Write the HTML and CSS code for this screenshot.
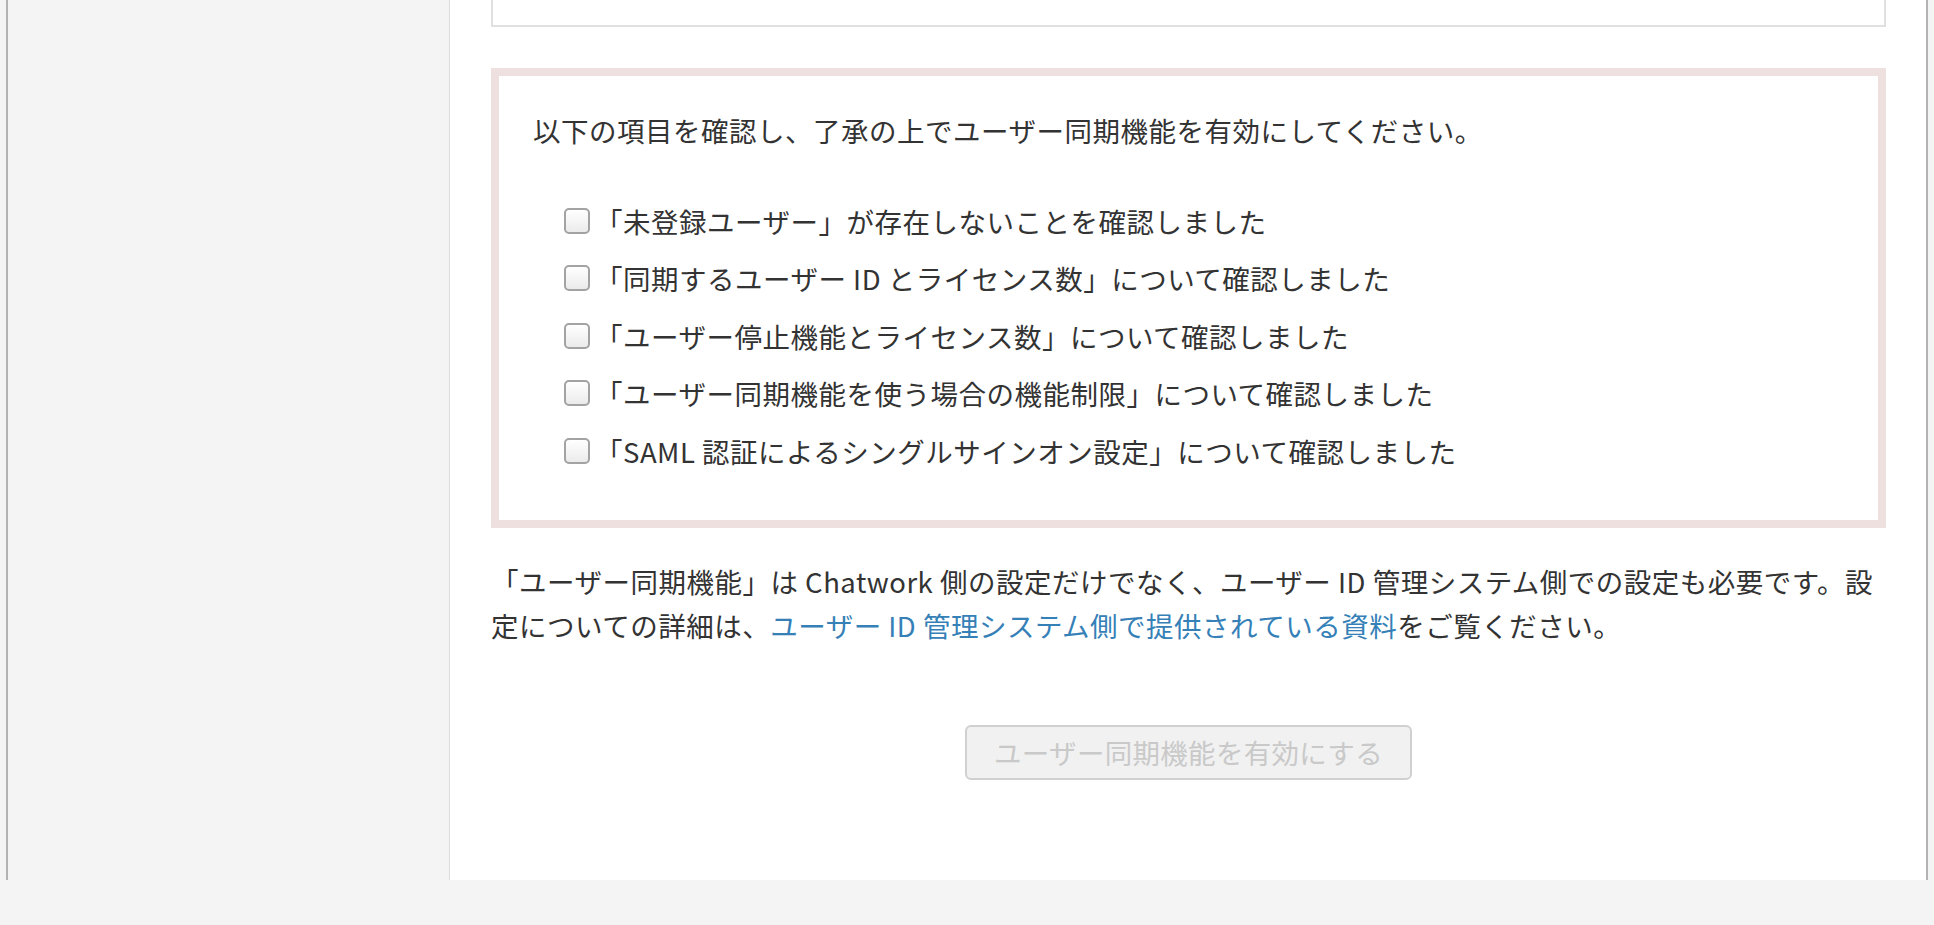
FILE: index.html
```html
<!DOCTYPE html>
<html>
  <head>
    <meta charset="utf-8">
    <title>ユーザー同期機能</title>
    <link rel="stylesheet" href="styles.css">
  </head>
  <body>
    <div class="frame">
      <div class="sidebar"></div>

      <div class="main">
        <!-- end of the previous section, scrolled mostly out of view -->
        <div class="prev-card"></div>

        <div class="confirm-box">
          <p class="confirm-lead">以下の項目を確認し、了承の上でユーザー同期機能を有効にしてください。</p>
          <ul class="check-list">
            <li><label><input type="checkbox" class="check">「未登録ユーザー」が存在しないことを確認しました</label></li>
            <li><label><input type="checkbox" class="check">「同期するユーザー ID とライセンス数」について確認しました</label></li>
            <li><label><input type="checkbox" class="check">「ユーザー停止機能とライセンス数」について確認しました</label></li>
            <li><label><input type="checkbox" class="check">「ユーザー同期機能を使う場合の機能制限」について確認しました</label></li>
            <li><label><input type="checkbox" class="check">「SAML 認証によるシングルサインオン設定」について確認しました</label></li>
          </ul>
        </div>

        <p class="note">「ユーザー同期機能」は Chatwork 側の設定だけでなく、ユーザー ID 管理システム側での設定も必要です。設定についての詳細は、<a href="#" class="note-link">ユーザー ID 管理システム側で提供されている資料</a>をご覧ください。</p>

        <div class="actions">
          <button type="button" class="enable-button" disabled>ユーザー同期機能を有効にする</button>
        </div>
      </div>
    </div>
  </body>
</html>
```

FILE: styles.css
```css
body {
  margin: 0;
  background: #f4f4f4;
  font-family: "Noto Sans CJK JP", "Noto Sans", sans-serif;
  color: #333;
}

.frame {
  display: flex;
  height: 880px;
  margin: 0 6px;
  border-left: 2px solid #b3b3b3;
  border-right: 2px solid #b3b3b3;
}

.sidebar {
  width: 441px;
  background: #f4f4f4;
  border-right: 1px solid #dcdcdc;
}

.main {
  flex: 1;
  background: #fff;
  padding: 0 40px 0 41px;
  letter-spacing: 0.5px;
}

.prev-card {
  height: 25px;
  border: 2px solid #e0e0e0;
  border-top: 0;
}

.confirm-box {
  margin-top: 41px;
  border: 8px solid #efe0e0;
  padding: 32px 34px 40px;
}

.confirm-lead {
  margin: 0;
  font-size: 27.5px;
  line-height: 44px;
}

.check-list {
  list-style: none;
  margin: 40px 0 0;
  padding: 0 0 0 31px;
}

.check-list li {
  height: 57.5px;
  display: flex;
  align-items: center;
  font-size: 27.5px;
}

.check-list label {
  display: flex;
  align-items: center;
}

.check {
  appearance: none;
  -webkit-appearance: none;
  width: 26px;
  height: 26px;
  margin: 0 5px 0 0;
  border: 2px solid #a3a3a3;
  border-radius: 5px;
  background: linear-gradient(#fff, #ebebeb);
}

.note {
  margin: 31px 0 0;
  font-size: 27.5px;
  line-height: 44px;
}

.note-link {
  color: #3580b7;
  text-decoration: none;
}

.actions {
  display: flex;
  justify-content: center;
  margin-top: 78px;
}

.enable-button {
  height: 55px;
  padding: 0 27px;
  font-family: inherit;
  font-size: 27.5px;
  letter-spacing: 0.3px;
  color: #c9c9c9;
  background: #f1f1f1;
  border: 2px solid #d0d0d0;
  border-radius: 6px;
}
```
